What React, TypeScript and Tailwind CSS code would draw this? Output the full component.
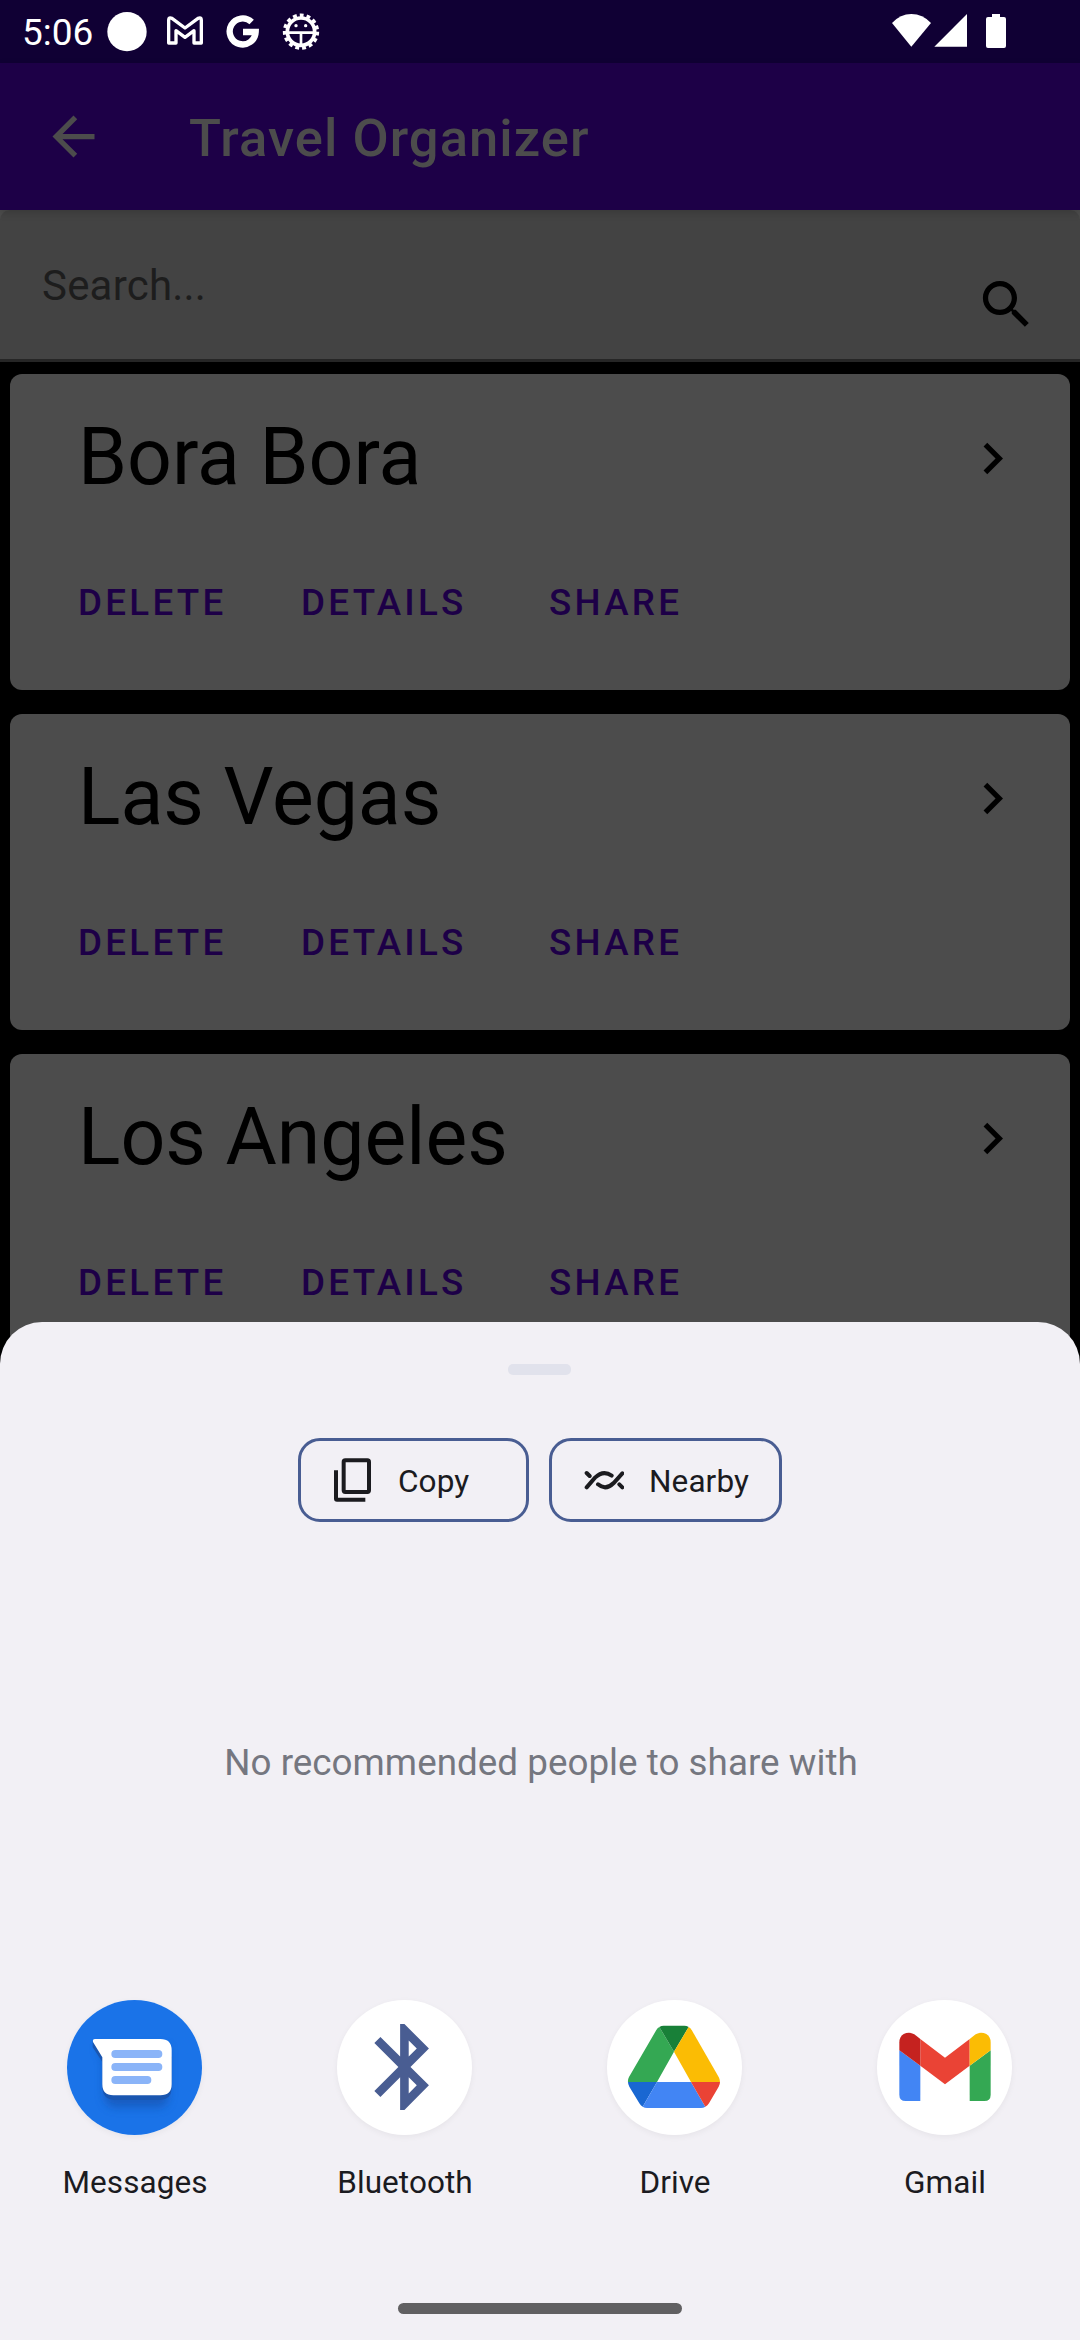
import React from "react";

function StatusBar() {
  return (
    <div className="flex h-[63px] shrink-0 items-center bg-[#100034] pr-[74px] pl-[22px] text-white">
      <span className="mt-px w-[84px] text-[37px] leading-[63px] whitespace-nowrap">5:06</span>
      <svg className="ml-px h-[63px] w-[213px]" viewBox="321 0 639 189" fill="none">
        <circle cx="381" cy="95" r="59" fill="#fff" />
        <path
          d="M506 60 Q506 51 516 55 L555 84 L594 55 Q604 51 604 60 V129 H582 V92 L555 112 L528 92 V129 H506 Z"
          stroke="#fff"
          strokeWidth="10"
          strokeLinejoin="round"
        />
        <path d="M755 66 A39 39 0 1 0 767 96 H729" stroke="#fff" strokeWidth="19" />
        <circle cx="903" cy="95" r="41" stroke="#fff" strokeWidth="11" />
        <circle cx="903" cy="95" r="49" stroke="#fff" strokeWidth="11" strokeDasharray="11.5 9.02" />
        <circle cx="888" cy="77" r="5" fill="#fff" />
        <circle cx="917" cy="77" r="5" fill="#fff" />
        <path d="M866 98 H940 M903 98 V134" stroke="#fff" strokeWidth="8" />
      </svg>
      <svg className="ml-auto h-[63px] w-[114px]" viewBox="96 0 342 189" fill="#fff">
        <path d="M154 140 L96 69 Q121 42 154 42 Q188 42 213 69 Z" />
        <path d="M321 42 V140 H223 Z" />
        <path d="M396 42 H420 V51 H432 Q438 51 438 57 V138 Q438 144 432 144 H384 Q378 144 378 138 V57 Q378 51 384 51 H396 Z" />
      </svg>
    </div>
  );
}

function AppBar() {
  return (
    <header className="relative z-10 flex h-[147px] shrink-0 items-center bg-[#1d0047] pl-[42px] text-[#4c4c4c] shadow-[0_3px_8px_rgba(0,0,0,0.16)]">
      <svg className="h-[63px] w-[63px]" viewBox="0 0 24 24" fill="currentColor">
        <path d="M20 11H7.83l5.59-5.59L12 4l-8 8 8 8 1.41-1.41L7.83 13H20v-2z" />
      </svg>
      <h1 className="mt-[3px] ml-[84px] text-[52.5px] leading-[64px] font-medium tracking-[1.07px]">Travel Organizer</h1>
    </header>
  );
}

function SearchField() {
  return (
    <div className="h-[152px] shrink-0 bg-[#4c4c4c]">
      <div className="flex h-full justify-between rounded-t-[10px] border-b-3 border-[#262626] bg-[#434343] pr-[42px] pl-[42px]">
        <span className="pt-[50px] text-[42px] leading-[52px] tracking-[0.2px] text-[#1d1d1d]">Search...</span>
        <svg className="mt-[63px] h-[63px] w-[63px]" viewBox="0 0 24 24" fill="#000">
          <path d="M15.5 14h-.79l-.28-.27C15.41 12.59 16 11.11 16 9.5 16 5.91 13.09 3 9.5 3S3 5.91 3 9.5 5.91 16 9.5 16c1.61 0 3.09-.59 4.23-1.57l.27.28v.79l5 4.99L20.49 19l-4.99-5zm-6 0C7.01 14 5 11.99 5 9.5S7.01 5 9.5 5 14 7.01 14 9.5 11.99 14 9.5 14z" />
        </svg>
      </div>
    </div>
  );
}

function TripCard({ name }: { name: string }) {
  return (
    <article className="h-[316px] shrink-0 rounded-[12px] bg-[#4c4c4c] pr-[46px] pl-[68px]">
      <div className="flex h-[168px] items-center justify-between">
        <h2 className="mb-[2px] text-[78.75px] leading-[92px] text-black">{name}</h2>
        <svg className="h-[63px] w-[63px]" viewBox="0 0 24 24" fill="#000">
          <path d="M10 6L8.59 7.41 13.17 12l-4.58 4.59L10 18l6-6z" />
        </svg>
      </div>
      <div className="flex h-[122px] items-center text-[36.75px] leading-[44px] font-medium tracking-[3.28px] text-[#1d0047]">
        <span className="w-[223px]">DELETE</span>
        <span className="w-[248px]">DETAILS</span>
        <span>SHARE</span>
      </div>
    </article>
  );
}

function CopyIcon() {
  return (
    <svg className="h-[45px] w-[40px]" viewBox="159 352 120 135" fill="none" stroke="#1b1b1f" strokeWidth="12">
      <rect x="191" y="359" width="76" height="95" rx="5" />
      <path d="M168 389 V474 Q168 477 171 477 H256" />
    </svg>
  );
}

function NearbyIcon() {
  return (
    <svg className="h-[45px] w-[40px]" viewBox="912 352 120 135" fill="none" stroke="#1b1b1f" strokeWidth="12" strokeLinecap="round">
      <path d="M920 440 L945 411 Q970 387 995 405" />
      <path d="M954 431 Q977 451 1001 427 L1027 398" />
      <path d="M920 397 L929 406 M1018 431 L1027 440" />
    </svg>
  );
}

function MessagesIcon() {
  return (
    <svg className="h-full w-full" viewBox="81 60 405 405">
      <defs>
        <filter id="msgBlur" x="-30%" y="-30%" width="160%" height="180%">
          <feGaussianBlur stdDeviation="14" />
        </filter>
      </defs>
      <circle cx="283.5" cy="262.5" r="202.5" fill="#1a73e8" />
      <path d="M172 200 H385 V350 Q385 382 350 382 H230 Q196 382 192 345 V240 Z" fill="#174ea6" opacity=".6" filter="url(#msgBlur)" />
      <path d="M158 184 V202 L187 246 V328 Q192 360 222 360 H360 Q392 360 395 328 V230 Z" fill="#1a56b0" />
      <path d="M165 177 H361 Q395 177 395 211 V313 Q395 346 361 346 H220 Q187 346 187 313 V232 L159 186 Q157 177 165 177 Z" fill="#fff" />
      <path d="M226 222 H355 M226 261 H355 M226 300 H322" stroke="#8ab4f8" strokeWidth="24" strokeLinecap="round" />
    </svg>
  );
}

function BluetoothIcon() {
  return (
    <svg className="h-full w-full" viewBox="891 60 405 405">
      <g transform="translate(938.7 106.3) scale(12.88)">
        <path
          fill="#495d92"
          d="M17.71 7.71L12 2h-1v7.59L6.41 5 5 6.41 10.59 12 5 17.59 6.41 19 11 14.41V22h1l5.71-5.71-4.3-4.29 4.3-4.29zM13 5.83l1.88 1.88L13 9.59V5.83zm1.88 10.46L13 18.17v-3.76l1.88 1.88z"
        />
      </g>
    </svg>
  );
}

function DriveIcon() {
  return (
    <svg className="h-full w-full" viewBox="81 60 405 405">
      <path d="M238 141 L282 215 L231 306 H144 Q143 299 147 291 L229 150 Q232 144 238 141 Z" fill="#34a853" />
      <path d="M238 141 Q244 137 251 137 H313 Q320 137 326 141 L282 215 Z" fill="#188038" />
      <path d="M326 141 Q331 144 335 150 L416 291 Q420 298 420 306 H333 L282 215 Z" fill="#fbbc04" />
      <path d="M144 306 H231 L188 380 Q182 377 178 370 L148 320 Q144 313 144 306 Z" fill="#1967d2" />
      <path d="M231 306 H333 L376 380 Q370 384 363 384 H201 Q194 384 188 380 Z" fill="#4285f4" />
      <path d="M333 306 H420 Q420 313 416 320 L387 370 Q383 377 376 380 Z" fill="#ea4335" />
    </svg>
  );
}

function GmailIcon() {
  return (
    <svg className="h-full w-full" viewBox="891 60 405 405">
      <path d="M958 211 L1021 257 V363 H977 Q958 363 958 344 Z" fill="#4285f4" />
      <path d="M1232 211 L1169 257 V363 H1213 Q1232 363 1232 344 Z" fill="#34a853" />
      <path d="M1021 177 L1095 233 L1169 177 V257 L1095 313 L1021 257 Z" fill="#ea4335" />
      <path d="M958 211 V187 Q958 170 971 162 Q988 154 1003 163 L1021 177 V257 Z" fill="#c5221f" />
      <path d="M1232 211 V187 Q1232 170 1219 162 Q1202 154 1187 163 L1169 177 V257 Z" fill="#fbbc04" />
    </svg>
  );
}

const targets = [
  { name: "Messages", Icon: MessagesIcon },
  { name: "Bluetooth", Icon: BluetoothIcon },
  { name: "Drive", Icon: DriveIcon },
  { name: "Gmail", Icon: GmailIcon },
];

function ShareSheet() {
  return (
    <section className="absolute inset-x-0 bottom-0 flex h-[1018px] flex-col items-center rounded-t-[42px] bg-[#f2f0f5] text-[#1b1b1f]">
      <div className="mt-[42px] mr-px h-[11px] w-[63px] rounded-[5px] bg-[#e1e2ec]" />
      <div className="mt-[63px] flex gap-[20px]">
        <button className="flex h-[84px] w-[231px] items-center rounded-[22px] border-3 border-[#495d92] pl-[32px]">
          <CopyIcon />
          <span className="mt-[3px] ml-[25px] text-[31.5px] leading-[38px] tracking-[0.1px]">Copy</span>
        </button>
        <button className="flex h-[84px] w-[233px] items-center rounded-[22px] border-3 border-[#495d92] pl-[32px]">
          <NearbyIcon />
          <span className="mt-[3px] ml-[25px] text-[31.5px] leading-[38px] tracking-[0.1px]">Nearby</span>
        </button>
      </div>
      <p className="mt-[219px] ml-[2px] text-[36.75px] leading-[44px] tracking-[0.04px] text-[#757780]">No recommended people to share with</p>
      <div className="mt-[215px] grid w-full grid-cols-4">
        {targets.map(({ name, Icon }) => (
          <div key={name} className="flex flex-col items-center">
            <div className="mr-px h-[135px] w-[135px] rounded-full bg-white shadow-[0_2px_6px_rgba(0,0,0,0.05)]">
              <Icon />
            </div>
            <span className="mt-[29px] text-[31.5px] leading-[38px] tracking-[0.05px]">{name}</span>
          </div>
        ))}
      </div>
      <div className="mt-auto mb-[26px] h-[11px] w-[284px] rounded-full bg-[#616062]" />
    </section>
  );
}

export default function App() {
  return (
    <div className="relative flex h-[2340px] w-[1080px] flex-col overflow-hidden bg-black font-[Roboto,sans-serif]">
      <StatusBar />
      <AppBar />
      <SearchField />
      <main className="flex flex-col gap-[24px] px-[10px] pt-[12px]">
        <TripCard name="Bora Bora" />
        <TripCard name="Las Vegas" />
        <TripCard name="Los Angeles" />
      </main>
      <ShareSheet />
    </div>
  );
}
